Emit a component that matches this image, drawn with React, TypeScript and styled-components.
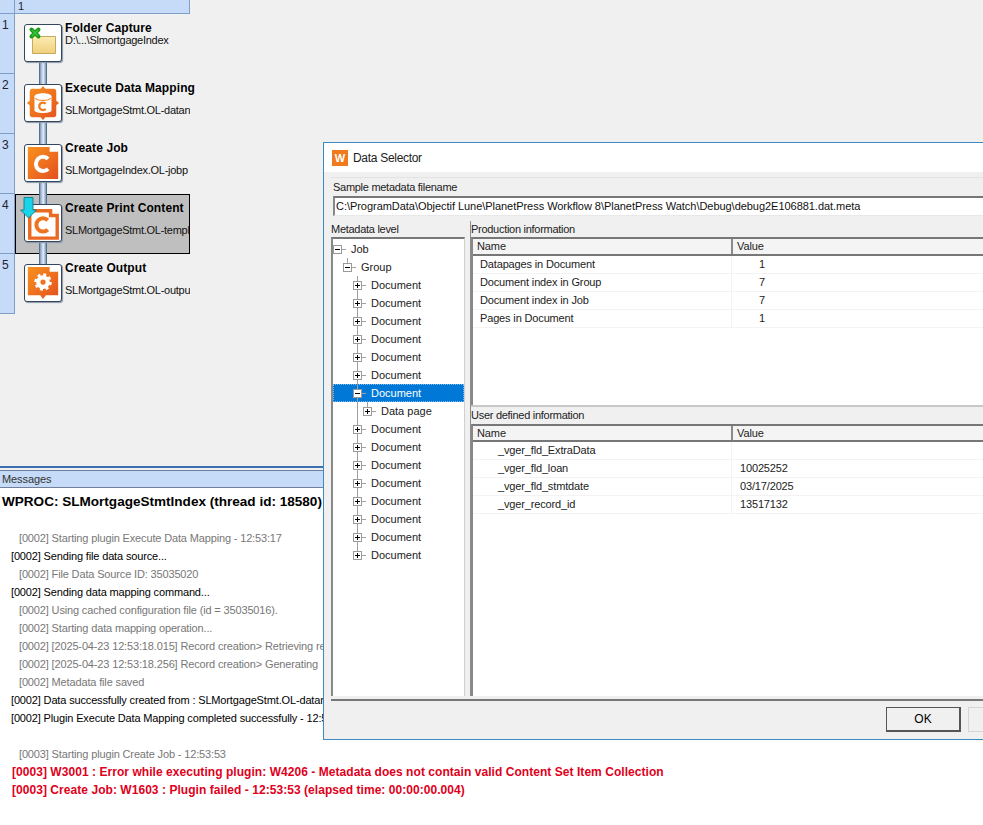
import React from 'react';
import styled, { createGlobalStyle } from 'styled-components';

const Global = createGlobalStyle`
  html, body { margin: 0; padding: 0; background: #fff; overflow: hidden; }
  body { font-family: "Liberation Sans", Arial, sans-serif; font-size: 12px; color: #000; }
  * { box-sizing: border-box; }
`;

const Page = styled.div`
  position: relative; width: 983px; height: 825px; overflow: hidden;
  display: flex; flex-direction: column; background: #fff;
`;
const Designer = styled.section`
  height: 466px; flex: none; background: #f0f0f0; display: flex; flex-direction: column;
`;
const ColumnStrip = styled.div`
  width: 190px; height: 14px; display: flex; flex: none;
`;
const Corner = styled.div`
  width: 15px; background: #c5dbf7; border-right: 1px solid #7f9fc9; border-bottom: 1px solid #7f9fc9;
`;
const ColumnCell = styled.div`
  flex: 1; background: #c5dbf7; border-right: 1px solid #7f9fc9; border-bottom: 1px solid #7f9fc9;
  padding-left: 3px; font-size: 11px; line-height: 12px; color: #223;
`;
const Flow = styled.div`display: flex; flex-direction: column; width: 190px;`;
const StepRow = styled.div`display: flex; height: 60px;`;
const RowHead = styled.div`
  width: 15px; flex: none; background: #c5dbf7; border-right: 1px solid #7f9fc9; border-bottom: 1px solid #7f9fc9;
  padding: 4px 0 0 2px; color: #223; line-height: 14px;
`;
const StepBody = styled.div<{ $selected?: boolean }>`
  position: relative; flex: 1; min-width: 0; display: flex; padding: 10px 0 0 9px; gap: 3px;
  ${p => p.$selected ? 'background: #bfbfbf; outline: 1px solid #000; outline-offset: -1px;' : ''}
`;
const IconTile = styled.div`
  position: relative; z-index: 2; width: 38px; height: 38px; flex: none; background: #fff; border: 1px solid #33475f;
  border-radius: 3px; box-shadow: 1px 1px 1px #8b97a5; display: flex; align-items: center; justify-content: center;
`;
const Connector = styled.div`
  position: absolute; z-index: 1; left: 24px; top: 46px; width: 8px; height: 26px;
  background: linear-gradient(90deg, #7d99bd 0%, #d3e0ef 45%, #e4ecf5 55%, #7d99bd 100%);
  border-left: 1px solid #56718f; border-right: 1px solid #56718f;
`;
const DropArrow = styled.svg`position: absolute; z-index: 3; left: 5px; top: 3px;`;
const StepText = styled.div<{ $tight?: boolean }>`
  display: flex; flex-direction: column; gap: ${p => p.$tight ? '0' : '9px'}; min-width: 0; margin-top: -2px;
  ${p => p.$tight ? '> :last-child { margin-top: -1px; }' : ''}
`;
const StepTitle = styled.div`font-weight: 700; line-height: 13px; white-space: nowrap; font-size: 12px; letter-spacing: .1px;`;
const StepSub = styled.div`
  width: 125px; overflow: hidden; white-space: nowrap; line-height: 12px; font-size: 11px; letter-spacing: -.27px; color: #111;
`;

const Rule = styled.div`height: 2px; background: #3c6fb4; flex: none;`;
const Gap = styled.div`height: 2px; background: #f0f0f0; flex: none;`;
const MessagesBar = styled.div`
  height: 18px; flex: none; background: #c5dbf7; border-top: 1px solid #70809a; border-bottom: 1px solid #70809a;
  padding-left: 2px; line-height: 17px; font-size: 11px; letter-spacing: -.1px; color: #333;
`;
const Messages = styled.section`flex: 1; background: #fff; padding-top: 5px;`;
const Heading = styled.h1`
  margin: 0 0 18px 2px; font-size: 13.55px; line-height: 18px; font-weight: 700; white-space: nowrap;
`;
const Log = styled.div<{ $kind: 'info' | 'plain' | 'error' }>`
  height: 18px; line-height: 18px; white-space: nowrap;
  font-size: ${p => p.$kind === 'error' ? '12px' : '11px'};
  letter-spacing: ${p => p.$kind === 'error' ? '.05px' : '-.15px'};
  padding-left: ${p => p.$kind === 'info' ? '19px' : p.$kind === 'plain' ? '11px' : '12px'};
  color: ${p => p.$kind === 'info' ? '#777' : p.$kind === 'plain' ? '#000' : '#e0001b'};
  font-weight: ${p => p.$kind === 'error' ? 700 : 400};
`;
const LogGap = styled.div`height: 18px;`;

const Dialog = styled.div`
  position: absolute; left: 323px; top: 142px; width: 700px; height: 598px; background: #f0f0f0;
  border: 1px solid #3c8ac4; display: flex; flex-direction: column;
`;
const TitleBar = styled.div`
  height: 29px; flex: none; background: #fff; display: flex; align-items: center; gap: 5px; padding-left: 8px;
  font-size: 12px; letter-spacing: -.3px; color: #222;
`;
const AppMark = styled.div`
  width: 16px; height: 16px; background: #f07a1c; color: #fff; font-weight: 700; font-size: 11px; letter-spacing: 0;
  display: flex; align-items: center; justify-content: center;
`;
const DialogBody = styled.div`flex: 1; min-height: 0; display: flex; flex-direction: column; padding: 5px 0 0 7px;`;
const FieldLabel = styled.div`
  height: 19px; line-height: 16px; padding: 1px 0 0 2px; font-size: 11px; letter-spacing: -.28px; color: #222; border-top: 1px solid #e3e3e3;
`;
const PathInput = styled.div`
  margin-left: 2px; height: 20px; background: #fff; border-top: 2px solid #777; border-left: 2px solid #888;
  border-bottom: 1px solid #e8e8e8; padding-left: 1px; line-height: 17px; font-size: 11px; letter-spacing: -.04px; white-space: nowrap; color: #111;
`;
const Panes = styled.div`flex: 1; min-height: 0; display: flex; gap: 3px; padding-top: 5px;`;
const LeftPane = styled.div`width: 136px; flex: none; display: flex; flex-direction: column;`;
const RightPane = styled.div`flex: 1; min-width: 0; display: flex; flex-direction: column; border-left: 1px solid #8d8d8d;`;
const PaneLabel = styled.div`
  height: 16px; padding-top: 1px; line-height: 15px; font-size: 11px; letter-spacing: -.28px; color: #222; white-space: nowrap;
`;
const Tree = styled.div`
  width: 134px; height: 459px; flex: none; background: #fff; border-top: 2px solid #777; border-left: 2px solid #888; border-right: 1px solid #d0d0d0;
  padding-top: 1px;
`;
const TreeRow = styled.div<{ $level: number; $selected?: boolean }>`
  position: relative; height: 18px; display: flex; align-items: center; font-size: 11px;
  padding-left: ${p => p.$level * 10}px;
  ${p => p.$selected ? 'background: #0078d7; color: #fff; outline: 1px dotted #7fb8e8; outline-offset: -1px;' : 'color: #222;'}
`;
const TreeLine = styled.span<{ $x: number; $half?: boolean }>`
  position: absolute; left: ${p => p.$x}px; top: 0; width: 1px; height: ${p => p.$half ? '9px' : '18px'}; background: #a0a0a0;
`;
const Expander = styled.span<{ $open?: boolean }>`
  position: relative; z-index: 1; width: 9px; height: 9px; flex: none; margin-right: 9px;
  background: #fff; border: 1px solid #9a9a9a;
  &::before { content: ''; position: absolute; left: 1px; top: 3px; width: 5px; height: 1px; background: #000; }
  ${p => p.$open ? '' : `&::after { content: ''; position: absolute; left: 3px; top: 1px; width: 1px; height: 5px; background: #000; }`}
`;
const Stub = styled.span`position: absolute; width: 4px; height: 1px; background: #a0a0a0; margin-left: 9px;`;
const Grid = styled.div<{ $grow?: boolean }>`
  height: ${p => p.$grow ? '272px' : '168px'}; flex: none; background: #fff; border-top: 2px solid #777; border-left: 2px solid #888;
`;
const GridHead = styled.div<{ $short?: boolean }>`
  display: flex; height: ${p => p.$short ? '16px' : '17px'}; border-bottom: 2px solid #777; background: #f4f4f4;
  font-size: 11px; letter-spacing: -.1px; line-height: 14px; color: #222;
`;
const HeadCell = styled.div<{ $w?: number }>`
  ${p => p.$w ? `width: ${p.$w}px; border-right: 2px solid #8a8a8a;` : 'flex: 1;'}
  flex-shrink: 0; padding-left: 4px;
`;
const GridRow = styled.div`
  display: flex; height: 18px; border-bottom: 1px solid #f3f3f3; font-size: 11px; letter-spacing: -.15px; line-height: 17px; color: #222;
`;
const NameCell = styled.div<{ $indent: number }>`
  width: 259px; flex: none; padding-left: ${p => p.$indent}px; border-right: 1px solid #f3f3f3; white-space: nowrap;
`;
const ValueCell = styled.div<{ $indent: number }>`flex: 1; padding-left: ${p => p.$indent}px;`;
const GridBand = styled.div`
  height: 19px; flex: none; border-top: 2px solid #c8c8c8; font-size: 11px; letter-spacing: -.28px; line-height: 17px; color: #222;
`;
const Footer = styled.div`
  height: 40px; flex: none; margin-top: 3px; border-top: 2px solid #777; display: flex; gap: 7px; padding: 6px 0 0 555px;
`;
const Button = styled.button<{ $primary?: boolean }>`
  width: 75px; height: 25px; flex: none; padding: 0; background: #f0f0f0; font: 12px "Liberation Sans", Arial, sans-serif; color: #000;
  border: 1px solid ${p => p.$primary ? '#555' : '#d5d5d5'};
  ${p => p.$primary ? 'border-right-width: 2px; border-bottom-width: 2px;' : ''}
`;

const Arc = ({ color, w = 3.6, cx = 19, cy = 19, r = 6 }: any) => (
  <path d={`M${cx + r * 0.72} ${cy - r * 0.7}A${r} ${r} 0 1 0 ${cx + r * 0.72} ${cy + r * 0.7}`} fill="none" stroke={color} strokeWidth={w} />
);
const FolderIcon = () => (
  <svg width="36" height="36" viewBox="0 0 36 36">
    <defs><linearGradient id="fg" x1="0" y1="0" x2="0" y2="1"><stop offset="0" stopColor="#fdf0b8" /><stop offset="1" stopColor="#efcf7c" /></linearGradient></defs>
    <path d="M7.500 9.500h6l2 2h15v17h-23z" fill="url(#fg)" stroke="#c9aa5c" />
    <path d="M6.500 4.500l7 7M13.500 4.500l-7 7" stroke="#1c9a1c" strokeWidth="4" strokeLinecap="round" />
    <path d="M7 5l6 6M13 5l-6 6" stroke="#37c437" strokeWidth="1.600" />
  </svg>
);
const orange = (id: string) => (
  <defs><linearGradient id={id} x1="0" y1="0" x2="1" y2="1"><stop offset="0" stopColor="#f8921f" /><stop offset="1" stopColor="#e4501f" /></linearGradient></defs>
);
const MappingIcon = () => (
  <svg width="36" height="36" viewBox="0 0 38 38">
    {orange('mg')}
    <path d="M19 1l2.500 3h8.500a3 3 0 0 1 3 3v9.500l3 2.500-3 2.500V31a3 3 0 0 1-3 3h-8.500l-2.500 3-2.500-3H8a3 3 0 0 1-3-3v-9.500l-3-2.500 3-2.500V7a3 3 0 0 1 3-3h8.500z" fill="url(#mg)" />
    <path d="M10 12c0-4.500 18-4.500 18 0v15c0 3.500-18 3.500-18 0z" fill="#fff" />
    <path d="M11 14c2 3 14 3 16 0" fill="none" stroke="#f08a2a" strokeWidth="1.300" />
    <Arc color="#ee7d20" w={2.4} cy={22.5} r={4} />
  </svg>
);
const JobIcon = () => (
  <svg width="36" height="36" viewBox="0 0 38 38">
    {orange('jg')}
    <path d="M3 2h23v5h9v29H3z" fill="url(#jg)" />
    <Arc color="#fff" w={4.2} cy={20} r={7.5} />
  </svg>
);
const PrintIcon = () => (
  <svg width="36" height="36" viewBox="0 0 38 38">
    <path d="M5 6h22v5h7v24H5z" fill="#fff" stroke="#ea6a22" strokeWidth="3.600" />
    <Arc color="#ee7420" w={4.2} cy={21} r={7} />
  </svg>
);
const OutputIcon = () => (
  <svg width="36" height="36" viewBox="0 0 38 38">
    {orange('og')}
    <path d="M3 2h23v5h9v25H22l-3 4-3-4H3z" fill="url(#og)" />
    <circle cx="19" cy="18" r="7.500" fill="none" stroke="#fff" strokeWidth="3.500" strokeDasharray="3 2.890" />
    <circle cx="19" cy="18" r="5" fill="none" stroke="#fff" strokeWidth="4.500" />
  </svg>
);

const steps = [
  { n: 1, title: 'Folder Capture', sub: 'D:\\...\\SlmortgageIndex', icon: <FolderIcon />, tight: true },
  { n: 2, title: 'Execute Data Mapping', sub: 'SLMortgageStmt.OL-datan', icon: <MappingIcon /> },
  { n: 3, title: 'Create Job', sub: 'SLMortgageIndex.OL-jobp', icon: <JobIcon /> },
  { n: 4, title: 'Create Print Content', sub: 'SLMortgageStmt.OL-templ', icon: <PrintIcon />, selected: true },
  { n: 5, title: 'Create Output', sub: 'SLMortgageStmt.OL-outpu', icon: <OutputIcon />, last: true },
];

const logs: (null | { k: 'info' | 'plain' | 'error'; t: string })[] = [
  { k: 'info', t: '[0002] Starting plugin Execute Data Mapping - 12:53:17' },
  { k: 'plain', t: '[0002] Sending file data source...' },
  { k: 'info', t: '[0002] File Data Source ID: 35035020' },
  { k: 'plain', t: '[0002] Sending data mapping command...' },
  { k: 'info', t: '[0002] Using cached configuration file (id = 35035016).' },
  { k: 'info', t: '[0002] Starting data mapping operation...' },
  { k: 'info', t: '[0002] [2025-04-23 12:53:18.015] Record creation> Retrieving re' },
  { k: 'info', t: '[0002] [2025-04-23 12:53:18.256] Record creation> Generating' },
  { k: 'info', t: '[0002] Metadata file saved' },
  { k: 'plain', t: '[0002] Data successfully created from : SLMortgageStmt.OL-datan' },
  { k: 'plain', t: '[0002] Plugin Execute Data Mapping completed successfully - 12:5' },
  null,
  { k: 'info', t: '[0003] Starting plugin Create Job - 12:53:53' },
  { k: 'error', t: '[0003] W3001 : Error while executing plugin: W4206 - Metadata does not contain valid Content Set Item Collection' },
  { k: 'error', t: '[0003] Create Job: W1603 : Plugin failed - 12:53:53 (elapsed time: 00:00:00.004)' },
];

const docsBefore = 6;
const docsAfter = 8;
const treeRows: { level: number; label: string; open?: boolean; selected?: boolean; lines: [number, boolean?][] }[] = [
  { level: 0, label: 'Job', open: true, lines: [] },
  { level: 1, label: 'Group', open: true, lines: [[14, true]] },
  ...Array.from({ length: docsBefore }, () => ({ level: 2, label: 'Document', lines: [[24]] as [number, boolean?][] })),
  { level: 2, label: 'Document', open: true, selected: true, lines: [[24]] },
  { level: 3, label: 'Data page', lines: [[24], [34, true]] },
  ...Array.from({ length: docsAfter }, (_, i) => ({ level: 2, label: 'Document', lines: [[24, i === docsAfter - 1]] as [number, boolean?][] })),
];

const prod = [['Datapages in Document', '1'], ['Document index in Group', '7'], ['Document index in Job', '7'], ['Pages in Document', '1']];
const user = [['_vger_fld_ExtraData', ''], ['_vger_fld_loan', '10025252'], ['_vger_fld_stmtdate', '03/17/2025'], ['_vger_record_id', '13517132']];

export default function App() {
  return (
    <Page>
      <Global />
      <Designer>
        <ColumnStrip><Corner /><ColumnCell>1</ColumnCell></ColumnStrip>
        <Flow>
          {steps.map(s => (
            <StepRow key={s.n}>
              <RowHead>{s.n}</RowHead>
              <StepBody $selected={s.selected}>
                <IconTile>{s.icon}</IconTile>
                {!s.last && <Connector />}
                {s.selected && (
                  <DropArrow width="17" height="22" viewBox="0 0 17 22">
                    <path d="M4 .5h9v12.500h3.500L8.500 21 .5 13H4z" fill="#19d4e8" stroke="#0a6f80" strokeWidth=".8" />
                  </DropArrow>
                )}
                <StepText $tight={s.tight}>
                  <StepTitle>{s.title}</StepTitle>
                  <StepSub>{s.sub}</StepSub>
                </StepText>
              </StepBody>
            </StepRow>
          ))}
        </Flow>
      </Designer>
      <Rule />
      <Gap />
      <MessagesBar>Messages</MessagesBar>
      <Messages>
        <Heading>WPROC: SLMortgageStmtIndex (thread id: 18580)</Heading>
        {logs.map((l, i) => l ? <Log key={i} $kind={l.k}>{l.t}</Log> : <LogGap key={i} />)}
      </Messages>

      <Dialog>
        <TitleBar><AppMark>W</AppMark>Data Selector</TitleBar>
        <DialogBody>
          <FieldLabel>Sample metadata filename</FieldLabel>
          <PathInput>C:\ProgramData\Objectif Lune\PlanetPress Workflow 8\PlanetPress Watch\Debug\debug2E106881.dat.meta</PathInput>
          <Panes>
            <LeftPane>
              <PaneLabel>Metadata level</PaneLabel>
              <Tree>
                {treeRows.map((r, i) => (
                  <TreeRow key={i} $level={r.level} $selected={r.selected}>
                    {r.lines.map(([x, half], j) => <TreeLine key={j} $x={x} $half={half} />)}
                    <Expander $open={r.open} />
                    <Stub />
                    {r.label}
                  </TreeRow>
                ))}
              </Tree>
            </LeftPane>
            <RightPane>
              <PaneLabel>Production information</PaneLabel>
              <Grid>
                <GridHead><HeadCell $w={260}>Name</HeadCell><HeadCell>Value</HeadCell></GridHead>
                {prod.map(([a, b]) => (
                  <GridRow key={a}><NameCell $indent={7}>{a}</NameCell><ValueCell $indent={27}>{b}</ValueCell></GridRow>
                ))}
              </Grid>
              <GridBand>User defined information</GridBand>
              <Grid $grow>
                <GridHead $short><HeadCell $w={260}>Name</HeadCell><HeadCell>Value</HeadCell></GridHead>
                {user.map(([a, b]) => (
                  <GridRow key={a}><NameCell $indent={25}>{a}</NameCell><ValueCell $indent={8}>{b}</ValueCell></GridRow>
                ))}
              </Grid>
            </RightPane>
          </Panes>
          <Footer>
            <Button $primary>OK</Button>
            <Button aria-hidden="true" />
          </Footer>
        </DialogBody>
      </Dialog>
    </Page>
  );
}
